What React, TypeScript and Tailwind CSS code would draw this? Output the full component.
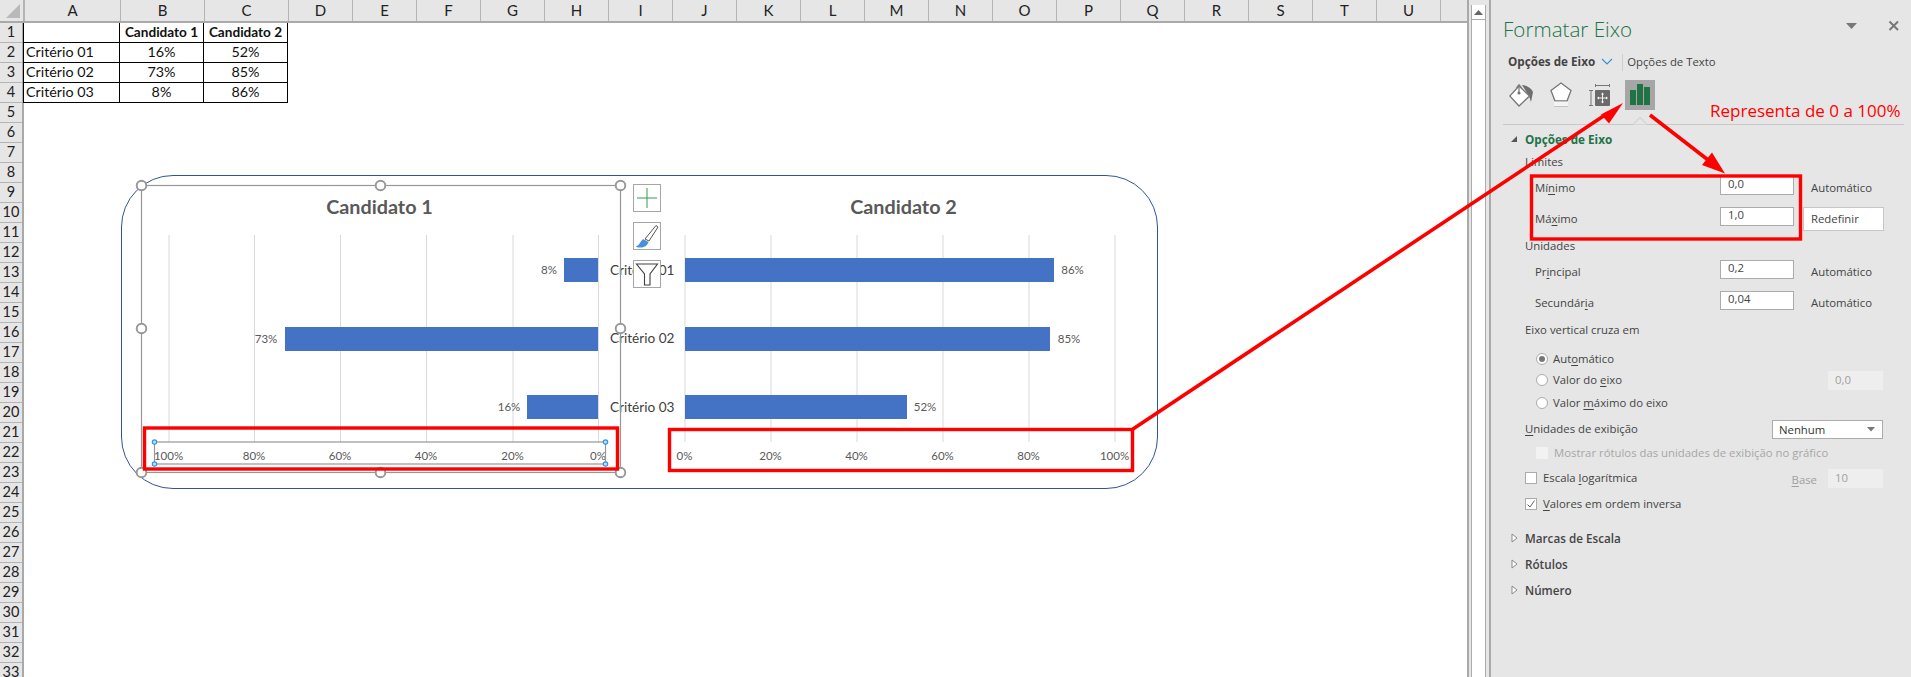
import React from "react";

const columns: [string, number][] = [["A", 96], ["B", 84], ["C", 84], ..."DEFGHIJKLMNOPQRSTU".split("").map((c) => [c, 64] as [string, number])];
const rows = Array.from({ length: 33 }, (_, i) => i + 1);

const tableData = [
  ["", "Candidato 1", "Candidato 2"],
  ["Critério 01", "16%", "52%"],
  ["Critério 02", "73%", "85%"],
  ["Critério 03", "8%", "86%"],
];

function Sheet() {
  return (
    <div className="w-[1467px] shrink-0 flex flex-col font-['Lato',sans-serif] text-[14px] text-[#222]">
      <div className="h-[23px] flex shrink-0 border-b-2 border-[#a9a9a9] bg-[#e6e6e6]">
        <div className="w-[25px] shrink-0 border-r-2 border-[#b4b4b4] flex items-end justify-end pr-[3px] pb-[2px]">
          <svg width="14" height="15"><polygon points="14,0 14,14 0,14" fill="#b9b9b9" /></svg>
        </div>
        {columns.map(([c, w]) => (
          <div key={c} style={{ width: w }} className="shrink-0 flex items-center justify-center border-r border-[#b4b4b4] text-[15px] leading-none">
            {c}
          </div>
        ))}
      </div>
      <div className="flex-1 flex min-h-0 overflow-hidden">
        <div className="w-[24px] shrink-0 bg-[#e6e6e6] border-r-2 border-[#a9a9a9]">
          {rows.map((r) => (
            <div key={r} className="h-[20px] flex items-center justify-center border-b border-[#b4b4b4] text-[14.5px] leading-none">
              {r}
            </div>
          ))}
        </div>
        <div className="flex-1 bg-white">
          <div className="w-[265px] -ml-px border-l border-black">
            {tableData.map((row, i) => (
              <div key={i} className="h-[20px] flex border-b border-black text-[14.3px] leading-none text-[#111]">
                {row.map((cell, j) => (
                  <div
                    key={j}
                    className={
                      j === 0
                        ? "w-[96px] shrink-0 flex items-center pl-[2px] border-r border-black"
                        : `w-[84px] shrink-0 flex items-center justify-center border-r border-black ${i === 0 ? "font-bold text-[13.6px]" : ""}`
                    }
                  >
                    {cell}
                  </div>
                ))}
              </div>
            ))}
          </div>
        </div>
      </div>
    </div>
  );
}

type Bar = { y: number; from: number; to: number; label: string; labelX: number };

const FONT = "Lato, sans-serif";

function Gridlines({ ticks }: { ticks: [string, number][] }) {
  return (
    <>
      {ticks.map(([t, x]) => (
        <g key={t}>
          <line x1={x + 0.5} x2={x + 0.5} y1={235} y2={442} stroke="#d9d9d9" />
          <text x={x} y={460} textAnchor="middle" fontSize="11.5" fontFamily={FONT} fill="#595959">{t}</text>
        </g>
      ))}
    </>
  );
}

function Bars({ bars }: { bars: Bar[] }) {
  return (
    <>
      {bars.map((b) => (
        <g key={b.label}>
          <rect x={b.from} y={b.y} width={b.to - b.from} height={24} fill="#4472c4" />
          <text x={b.labelX} y={b.y + 16} textAnchor="middle" fontSize="11.5" fontFamily={FONT} fill="#595959">{b.label}</text>
        </g>
      ))}
    </>
  );
}

function Handle({ x, y }: { x: number; y: number }) {
  return <circle cx={x} cy={y} r={4.8} fill="#fff" stroke="#979797" strokeWidth={1.9} />;
}

function BlueHandle({ x, y }: { x: number; y: number }) {
  return <circle cx={x} cy={y} r={2.2} fill="#bfe0fb" stroke="#2f95e8" strokeWidth={1.2} />;
}

function ChartOne() {
  const ticks: [string, number][] = [["100%", 168.5], ["80%", 254], ["60%", 340], ["40%", 426], ["20%", 512.5], ["0%", 598]];
  const bars = [
    { y: 258, from: 564, to: 598, label: "8%", labelX: 549 },
    { y: 327, from: 285, to: 598, label: "73%", labelX: 266 },
    { y: 395, from: 527, to: 598, label: "16%", labelX: 509 },
  ];
  return (
    <svg viewBox="121 175 499 314" className="w-[499px] h-[314px] overflow-visible relative z-10 shrink-0">
      <text x="379.5" y="214" textAnchor="middle" fontSize="19.8" fontWeight="700" fontFamily={FONT} fill="#595959">Candidato 1</text>
      <Gridlines ticks={ticks} />
      <Bars bars={bars} />
      <rect x="141.5" y="185.5" width="479" height="287" fill="none" stroke="#979797" strokeWidth="1.2" />
      <rect x="154.5" y="442" width="451" height="22" fill="none" stroke="#979797" strokeWidth="1.2" />
      {[[154.5, 442], [605.5, 442], [154.5, 464], [605.5, 464]].map(([x, y], i) => <BlueHandle key={i} x={x} y={y} />)}
      {[[141.5, 185.5], [380.5, 185.5], [620.5, 185.5], [141.5, 328.5], [620.5, 328.5], [141.5, 472.5], [380.5, 472.5], [620.5, 472.5]].map(([x, y], i) => <Handle key={i} x={x} y={y} />)}
    </svg>
  );
}

function ChartTwo() {
  const ticks: [string, number][] = [["0%", 684.5], ["20%", 770.5], ["40%", 856.5], ["60%", 942.5], ["80%", 1028.5], ["100%", 1114.5]];
  const bars = [
    { y: 258, from: 685, to: 1054, label: "86%", labelX: 1072.5 },
    { y: 327, from: 685, to: 1050, label: "85%", labelX: 1069 },
    { y: 395, from: 685, to: 907, label: "52%", labelX: 925 },
  ];
  return (
    <svg viewBox="620 175 538 314" className="w-[538px] h-[314px] overflow-visible shrink-0">
      <text x="903.5" y="214" textAnchor="middle" fontSize="19.8" fontWeight="700" fontFamily={FONT} fill="#595959">Candidato 2</text>
      <Gridlines ticks={ticks} />
      <Bars bars={bars} />
      {[["Critério 01", 275], ["Critério 02", 343], ["Critério 03", 412]].map(([t, y]) => (
        <text key={t as string} x="610" y={y as number} fontSize="13.6" fontFamily={FONT} fill="#404040">{t}</text>
      ))}
    </svg>
  );
}

function ChartButton({ children }: { children: React.ReactNode }) {
  return <div className="w-[28px] h-[28px] bg-white border border-[#a6a6a6] flex items-center justify-center">{children}</div>;
}

function ChartButtons() {
  return (
    <div className="absolute left-[633px] top-[184px] z-20 flex flex-col gap-[10px]">
      <ChartButton>
        <svg width="24" height="24"><path d="M12 2v20M2 12h20" stroke="#2e9e4f" strokeWidth="1" /></svg>
      </ChartButton>
      <ChartButton>
        <svg width="26" height="26" viewBox="0 0 26 26">
          <path d="M11 16 L22 2.5 L24 4 L15 18 Z" fill="#fff" stroke="#555" strokeWidth="1" />
          <path d="M1.5 23.5 C5 23 6 19 9 16 L14.5 19 C13.5 22 11 24.5 7 24.5 C5 24.5 3 24.5 1.5 23.5 Z" fill="#4a90d9" />
        </svg>
      </ChartButton>
      <ChartButton>
        <svg width="24" height="24" viewBox="0 0 24 24">
          <path d="M1.5 2 H22.5 L15 12 V23 H9.5 V12 Z" fill="#fff" stroke="#404040" strokeWidth="1.1" />
        </svg>
      </ChartButton>
    </div>
  );
}

function Charts() {
  return (
    <>
      <div className="absolute left-[121px] top-[175px] w-[1037px] h-[314px] rounded-[52px] border border-[#2f5597] bg-white flex box-border">
        <div className="-m-px flex">
          <ChartOne />
          <ChartTwo />
        </div>
      </div>
      <ChartButtons />
    </>
  );
}

function Annotations() {
  const red = "#ff0000";
  return (
    <>
      <svg className="absolute left-0 top-0 w-[1911px] h-[677px] z-30 pointer-events-none" viewBox="0 0 1911 677">
        <rect x="144.5" y="428" width="473" height="41" fill="none" stroke={red} strokeWidth="3.4" />
        <rect x="669.5" y="429.5" width="463" height="41" fill="none" stroke={red} strokeWidth="3.4" />
        <rect x="1531.5" y="176" width="269" height="63" fill="none" stroke={red} strokeWidth="3.4" />
        <line x1="1133" y1="429" x2="1608" y2="113" stroke={red} strokeWidth="3.6" />
        <polygon points="1623,103 1601,114.5 1609,123.5" fill={red} />
        <line x1="1650" y1="115" x2="1712" y2="163" stroke={red} strokeWidth="3.6" />
        <polygon points="1725,173.5 1702,165 1712,152.5" fill={red} />
      </svg>
      <div className="absolute left-[1710px] top-[98px] z-30 leading-[26px] text-[17px] text-[#ff0000] font-['Open_Sans',sans-serif] whitespace-nowrap">
        Representa de 0 a 100%
      </div>
    </>
  );
}

function Input({ value, disabled, className = "" }: { value: string; disabled?: boolean; className?: string }) {
  return (
    <div
      className={`h-[19px] flex items-center pl-[7px] border leading-none pb-[3px] ${
        disabled ? "w-[55px] bg-[#eeeeee] border-[#eeeeee] text-[#a0a0a0]" : "w-[74px] bg-white border-[#ababab] text-[#444]"
      } ${className}`}
    >
      {value}
    </div>
  );
}

function U({ children }: { children: React.ReactNode }) {
  return <span className="underline underline-offset-2 decoration-1">{children}</span>;
}

function NumRow({ label, value, h, extra }: { label: React.ReactNode; value: string; h: string; extra: React.ReactNode }) {
  return (
    <div className={`${h} flex items-center pl-[44px]`}>
      <div className="w-[185px]">{label}</div>
      <Input value={value} className="mb-[6px]" />
      {extra}
    </div>
  );
}

function Radio({ checked }: { checked?: boolean }) {
  return (
    <div className="w-[12px] h-[12px] rounded-full bg-white border border-[#ababab] mr-[5px] flex items-center justify-center shrink-0">
      {checked && <div className="w-[6px] h-[6px] rounded-full bg-[#777]" />}
    </div>
  );
}

function Check({ checked, disabled }: { checked?: boolean; disabled?: boolean }) {
  return (
    <div className={`w-[12px] h-[12px] shrink-0 mr-[6px] border flex items-center justify-center ${disabled ? "bg-[#f2f2f2] border-[#f2f2f2]" : "bg-white border-[#ababab]"}`}>
      {checked && (
        <svg width="10" height="10" viewBox="0 0 10 10"><path d="M1.5 5.5 L4 8 L8.5 1.5" fill="none" stroke="#666" strokeWidth="1" /></svg>
      )}
    </div>
  );
}

function Collapsed({ label, className }: { label: string; className: string }) {
  return (
    <div className={`${className} flex items-center pl-[20px] font-semibold text-[11.7px] text-[#444]`}>
      <svg width="8" height="10" className="mr-[6px] -mt-[2px]"><polygon points="1,1 6,5 1,9" fill="#fff" stroke="#8a8a8a" /></svg>
      {label}
    </div>
  );
}

function TabIcons() {
  return (
    <div className="h-[30px] mt-[6px] flex items-center pl-[18px]">
      <svg width="24" height="24" viewBox="0 0 24 24" className="mr-[17px]">
        <path d="M13 2 Q21 3 24 9 L22 19 L20 13 Z" fill="#6e6e6e" />
        <path d="M10 3 L20.5 13 L10 23 L0.8 13 Z" fill="#fff" stroke="#777" strokeWidth="1.3" />
        <path d="M10 1.5 V10" stroke="#777" strokeWidth="1.2" />
        <path d="M7.5 5 Q10 -1.5 12.5 5" fill="none" stroke="#777" strokeWidth="1" />
        <circle cx="10" cy="10" r="1.6" fill="#777" />
      </svg>
      <svg width="22" height="26" viewBox="0 0 22 26" className="mr-[17px]">
        <path d="M11 1 L21 8.5 L17 19 H5 L1 8.5 Z" fill="#fff" stroke="#777" strokeWidth="1.3" />
        <rect x="4" y="19.5" width="14" height="4.5" fill="#f4f4f4" />
        <path d="M4 24.5 H18" stroke="#c4c4c4" strokeWidth="1" />
      </svg>
      <svg width="21" height="22" viewBox="0 0 21 22" className="mr-[15px]">
        <path d="M6 1.5 H21 M6.5 0 V3 M20.5 0 V3" stroke="#777" strokeWidth="1" fill="none" />
        <path d="M0 6.5 H4 M0 21.5 H4 M2 6.5 V21.5" stroke="#777" strokeWidth="1" fill="none" />
        <rect x="6" y="6" width="15" height="16" rx="1" fill="#6b6b6b" />
        <path d="M13.5 10 V18 M9.5 14 H17.5" stroke="#fff" strokeWidth="0.9" />
        <path d="M13.5 8.5 l-1.5 2 h3 Z M13.5 19.5 l-1.5 -2 h3 Z M8 14 l2 -1.5 v3 Z M19 14 l-2 -1.5 v3 Z" fill="#fff" />
      </svg>
      <div className="w-[30px] h-[30px] bg-[#a6a6a6] flex items-end justify-center gap-[1px] pb-[5px]">
        <div className="w-[6px] h-[15px] bg-[#217346]" />
        <div className="w-[6px] h-[21px] bg-[#217346]" />
        <div className="w-[6px] h-[18px] bg-[#217346]" />
      </div>
    </div>
  );
}

function Panel() {
  const auto = <div className="ml-[17px]">Automático</div>;
  return (
    <div className="flex-1 bg-[#e6e6e6] pt-[10px] font-['Open_Sans',sans-serif] text-[11.35px] text-[#444] border-l border-[#a9a9a9] whitespace-nowrap">
      <div className="h-[40px] relative flex items-center pl-[12px] pb-[1px] text-[#217346] text-[20.6px] font-light">
        Formatar Eixo
        <svg width="12" height="7" className="absolute left-[355px] top-[13px]"><polygon points="0,0 11,0 5.5,6" fill="#777" /></svg>
        <svg width="12" height="12" className="absolute left-[397px] top-[10px]"><path d="M1.5 1.5 L10 10 M10 1.5 L1.5 10" stroke="#777" strokeWidth="2" /></svg>
      </div>
      <div className="h-[24px] flex items-center pl-[17px]">
        <span className="font-bold text-[11.7px] text-[#444]">Opções de Eixo</span>
        <svg width="12" height="8" className="ml-[6px]"><path d="M1 1 L6 6 L11 1" fill="none" stroke="#3d8fd1" strokeWidth="1.2" /></svg>
        <div className="w-px h-[17px] bg-[#d0d0d0] ml-[9px] mr-[4px]" />
        <span>Opções de Texto</span>
      </div>
      <TabIcons />
      <div className="relative h-px bg-[#c8c8c8] mt-[14px] ml-[12px] mr-[7px]">
        <svg width="16" height="8" className="absolute left-[130px] -top-[7px]"><polygon points="0,7.5 7,0.5 14,7.5" fill="#e6e6e6" /><path d="M0 7.5 L7 0.5 L14 7.5" fill="none" stroke="#c8c8c8" /></svg>
      </div>
      <div className="mt-[4px] h-[22px] flex items-center pl-[19px] font-bold text-[11.7px] text-[#217346]">
        <svg width="8" height="8" className="mr-[7px] -mt-[2px]"><polygon points="7,1 7,7 1,7" fill="#555" /></svg>
        Opções de Eixo
      </div>
      <div className="h-[22px] flex items-center pl-[34px]">Limites</div>
      <NumRow h="h-[30px]" value="0,0" label={<>Mí<U>n</U>imo</>} extra={auto} />
      <div className="h-[1px]" />
      <div className="h-[30px] flex items-center pl-[44px]">
        <div className="w-[185px]">Má<U>x</U>imo</div>
        <Input value="1,0" className="mb-[6px]" />
        <div className="ml-[9px] w-[81px] h-[24px] bg-white border border-[#c6c6c6] flex items-center pl-[7px]">Redefinir</div>
      </div>
      <div className="h-[24px] flex items-center pl-[34px]">Unidades</div>
      <NumRow h="h-[28px]" value="0,2" label={<>Pr<U>i</U>ncipal</>} extra={auto} />
      <NumRow h="h-[34px]" value="0,04" label={<>Secundár<U>i</U>a</>} extra={auto} />
      <div className="h-[20px] flex items-center pl-[34px]">Eixo vertical cruza em</div>
      <div className="h-[21px] mt-[8px] flex items-center pl-[45px]"><Radio checked /><span>Aut<U>o</U>mático</span></div>
      <div className="h-[22px] flex items-center pl-[45px]">
        <Radio /><span>Valor do <U>e</U>ixo</span>
        <div className="ml-auto mr-[28px]"><Input value="0,0" disabled className="!pb-0 !pl-[6px]" /></div>
      </div>
      <div className="h-[24px] flex items-center pl-[45px]"><Radio /><span>Valor <U>m</U>áximo do eixo</span></div>
      <div className="h-[28px] flex items-center pl-[34px]">
        <span><U>U</U>nidades de exibição</span>
        <div className="ml-auto mr-[28px] w-[111px] h-[19px] bg-white border border-[#ababab] flex items-center justify-between pl-[6px] pr-[6px] text-[#333]">
          Nenhum
          <svg width="9" height="5"><polygon points="0,0 8,0 4,4.5" fill="#777" /></svg>
        </div>
      </div>
      <div className="h-[20px] flex items-center pl-[45px] text-[#a6a6a6]"><Check disabled />Mostrar rótulos das unidades de exibição no gráfico</div>
      <div className="h-[30px] flex items-center pl-[34px]">
        <Check /><span>Escala <U>l</U>ogarítmica</span>
        <span className="ml-auto mr-[11px] mt-[3px] text-[#a0a0a0]"><U>B</U>ase</span>
        <div className="mr-[28px]"><Input value="10" disabled className="!pb-0 !pl-[6px]" /></div>
      </div>
      <div className="h-[22px] flex items-center pl-[34px]"><Check checked /><span><U>V</U>alores em ordem inversa</span></div>
      <Collapsed label="Marcas de Escala" className="h-[24px] mt-[12px]" />
      <Collapsed label="Rótulos" className="h-[24px] mt-[2px]" />
      <Collapsed label="Número" className="h-[24px] mt-[2px]" />
    </div>
  );
}

function ScrollBar() {
  return (
    <div className="w-[23px] shrink-0 bg-[#e6e6e6] flex">
      <div className="w-[2px] bg-[#a9a9a9]" />
      <div className="w-[2px]" />
      <div className="w-[15px] bg-white border-x border-[#ababab] flex flex-col mt-[5px]">
        <div className="h-[15px] flex items-center justify-center border-b border-[#ababab]">
          <svg width="9" height="5"><polygon points="0,5 9,5 4.5,0" fill="#666" /></svg>
        </div>
      </div>
      <div className="w-[3px]" />
      <div className="w-px bg-[#a9a9a9]" />
    </div>
  );
}

export default function App() {
  return (
    <div className="relative w-[1911px] h-[677px] overflow-hidden flex bg-[#e6e6e6]">
      <Sheet />
      <ScrollBar />
      <Panel />
      <Charts />
      <Annotations />
    </div>
  );
}
